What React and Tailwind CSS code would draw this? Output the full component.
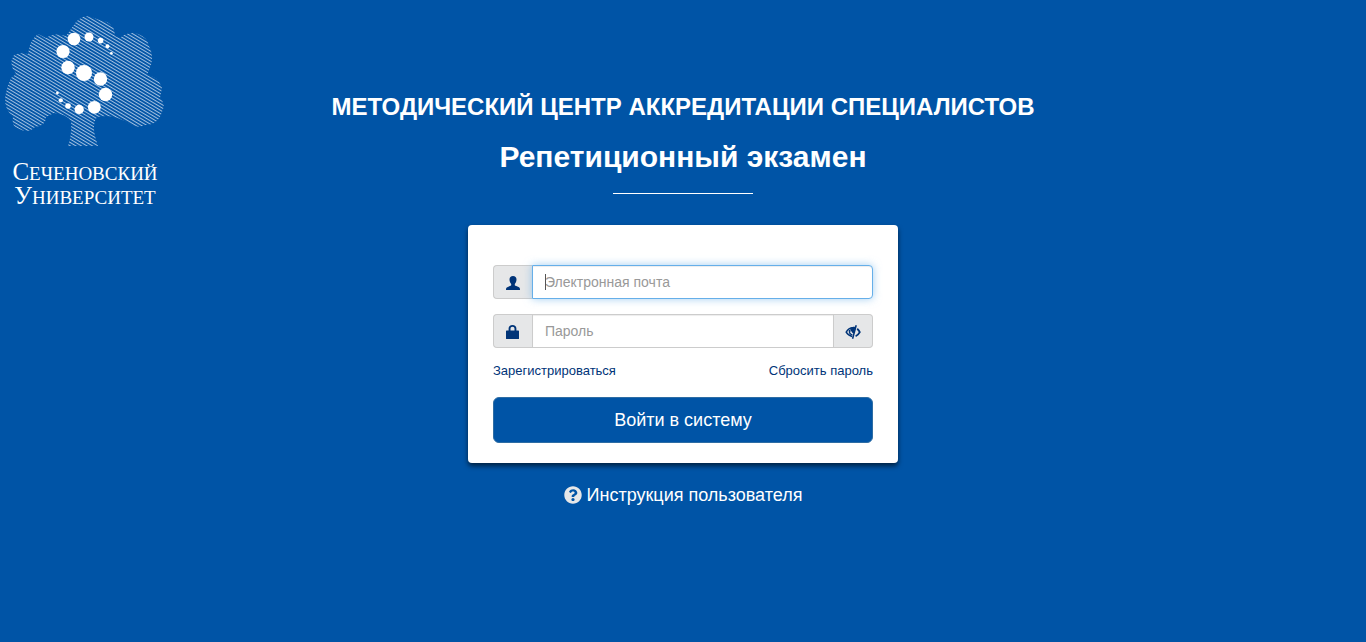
import { useState } from 'react';
import { FaQuestionCircle } from 'react-icons/fa';

const dots = [
  [89, 37, 4.5], [74, 39, 6.3], [63, 51.5, 6.6], [68, 67.5, 6.7], [84, 73, 8],
  [100.5, 79, 6.7], [105.5, 94.5, 6.7], [94.3, 107.3, 6.4], [79.2, 109.4, 4.6],
  [68, 106, 2.8], [60.8, 100.3, 2.1], [57.4, 93, 1.4],
  [100.6, 40.6, 2.8], [107.5, 46.3, 2], [111.3, 53.3, 1.4],
];

function Logo() {
  return (
    <div className="w-[170px] pt-3 text-white">
      <svg viewBox="0 12 170 140" className="block w-full" role="img" aria-label="Сеченовский Университет">
        <defs>
          <pattern id="hatch" width="20" height="2.85" patternUnits="userSpaceOnUse" patternTransform="rotate(31)">
            <rect width="20" height="1" fill="#a3c0e0" />
          </pattern>
        </defs>
        <path
          fill="url(#hatch)"
          d="M76 22 Q84 13 94 18 Q101 21 107 22 Q115 26 115 36 L120 38 Q128 31 138 34 Q147 37 149 46 Q154 56 151 65 L147 75 Q158 76 162 88 L160 98 Q166 104 162 112 Q158 125 145 125 Q138 129 130 124 Q117 116 106 116 L97 117 Q92 124 95 136 L98 146 L68 146 Q72 135 71 121 Q66 114 54 113 L46 117 Q46 126 35 127 Q29 134 19 129 Q11 127 13 116 Q5 111 5 98 Q7 86 11 78 L16 74 Q8 64 14 55 Q20 52 28 54 Q30 39 38 34 L46 38 Q54 32 66 36 Z"
        />
        {dots.map(([x, y, r]) => (
          <circle key={`${x}-${y}`} cx={x} cy={y} r={r} fill="#fff" />
        ))}
      </svg>
      <div className="mt-[9px] flex flex-col items-center font-['Liberation_Serif',serif] text-[19px] leading-[22px]">
        <span><span className="text-[25px] leading-[22px]">С</span>ЕЧЕНОВСКИЙ</span>
        <span><span className="text-[25px] leading-[22px]">У</span>НИВЕРСИТЕТ</span>
      </div>
    </div>
  );
}

function UserIcon() {
  return (
    <svg viewBox="0 0 14 14" className="size-3.5" fill="currentColor" aria-hidden="true">
      <path d="M7 0C4.8 0 3.5 1.4 3.5 3.6C3.5 5.4 4.2 7 5.2 8V9.3C5.2 9.8 0.9 10.8 0.3 12C0 12.7 0 13.3 0 14H14C14 13.3 14 12.7 13.7 12C13.1 10.8 8.8 9.8 8.8 9.3V8C9.8 7 10.5 5.4 10.5 3.6C10.5 1.4 9.2 0 7 0Z" />
    </svg>
  );
}

function LockIcon() {
  return (
    <svg viewBox="0 0 14 14" className="size-3.5" fill="currentColor" aria-hidden="true">
      <path fillRule="evenodd" d="M0.6 5.6H2.6V3.6C2.6 1.4 4.2 0 6.5 0S10.4 1.4 10.4 3.6V5.6H12.4Q13 5.6 13 6.2V13.4Q13 14 12.4 14H0.6Q0 14 0 13.4V6.2Q0 5.6 0.6 5.6ZM4.5 5.6H8.5V3.7C8.5 2.5 7.8 1.7 6.5 1.7S4.5 2.5 4.5 3.7Z" />
    </svg>
  );
}

function EyeCloseIcon() {
  return (
    <svg viewBox="0 0 16 14" className="h-3.5 w-4" fill="none" stroke="currentColor" aria-hidden="true">
      <path strokeWidth="1.5" d="M7.2 11.6C4.6 11 2.6 9.5 1.2 7.2C2.8 4.5 5.2 3 8 2.6C8.6 2.5 9.2 2.5 9.8 2.6" />
      <path strokeWidth="1.8" d="M12.2 3.8C13.3 4.7 14.2 5.9 14.8 7.2C13.8 9.2 12.4 10.4 10.6 11.2" />
      <path strokeWidth="1.2" d="M4.4 5C4 7.6 5.4 9.4 7.4 9.8" />
      <path fill="currentColor" stroke="none" d="M5.2 3.6L10.6 1.8L8.8 8.4C7.6 8.4 6.8 7.6 6.9 6.2L5.6 7Z" />
      <path strokeWidth="1.5" d="M11.2 0.3L7.6 13.8" />
    </svg>
  );
}

const addon = 'flex w-[39px] shrink-0 items-center justify-center border border-[#ccc] bg-[#e6e7e8] pt-0.5 text-[#003478]';
const field =
  'min-w-0 flex-1 border border-[#ccc] bg-white px-3 text-sm text-[#555] shadow-[inset_0_1px_1px_rgba(0,0,0,0.075)] outline-none placeholder:text-[#999] focus:border-[#66afe9] focus:shadow-[inset_0_1px_1px_rgba(0,0,0,0.075),0_0_8px_rgba(102,175,233,0.6)]';

export default function App() {
  const [email, setEmail] = useState('');
  const [password, setPassword] = useState('');
  const [visible, setVisible] = useState(false);

  return (
    <div className="grid min-h-screen grid-cols-[1fr_auto_1fr] items-start bg-[#0054a6] font-['Liberation_Sans',Arial,sans-serif]">
      <Logo />
      <main className="flex flex-col items-center pt-[94px] text-white">
        <h1 className="text-2xl leading-[26px] font-bold">МЕТОДИЧЕСКИЙ ЦЕНТР АККРЕДИТАЦИИ СПЕЦИАЛИСТОВ</h1>
        <h2 className="mt-5 text-3xl leading-[34px] font-bold">Репетиционный экзамен</h2>
        <hr className="mt-[19px] w-[140px] border-white" />

        <form
          onSubmit={(e) => e.preventDefault()}
          className="mt-[31px] w-[430px] rounded bg-white px-[25px] pt-10 pb-5 shadow-[0_3px_5px_rgba(0,0,0,0.6)]"
        >
          <div className="relative flex h-[34px]">
            <label htmlFor="email" aria-label="Электронная почта" className={`${addon} rounded-l border-r-0`}>
              <UserIcon />
            </label>
            <input
              id="email"
              type="email"
              autoFocus
              value={email}
              onChange={(e) => setEmail(e.target.value)}
              placeholder="Электронная почта"
              className={`${field} peer rounded-r placeholder-shown:caret-transparent`}
            />
            {/* steady caret while the field is still empty */}
            <span
              aria-hidden="true"
              className="pointer-events-none absolute top-[9px] left-[52px] hidden h-4 w-px bg-[#555] peer-placeholder-shown:peer-focus:block"
            />
          </div>
          <div className="mt-[15px] flex h-[34px]">
            <label htmlFor="password" aria-label="Пароль" className={`${addon} rounded-l border-r-0`}>
              <LockIcon />
            </label>
            <input
              id="password"
              type={visible ? 'text' : 'password'}
              value={password}
              onChange={(e) => setPassword(e.target.value)}
              placeholder="Пароль"
              className={field}
            />
            <button
              type="button"
              aria-label="Показать пароль"
              onClick={() => setVisible(!visible)}
              className={`${addon} rounded-r border-l-0`}
            >
              <EyeCloseIcon />
            </button>
          </div>
          <div className="mt-[13px] flex justify-between text-[13px] leading-5 text-[#003478]">
            <a href="#register">Зарегистрироваться</a>
            <a href="#reset">Сбросить пароль</a>
          </div>
          <button
            type="submit"
            className="mt-4 h-[46px] w-full rounded-md border border-[#2e6da4] bg-[#0054a6] text-lg text-white"
          >
            Войти в систему
          </button>
        </form>

        <a href="#manual" className="mt-5 flex items-center gap-[5px] text-lg leading-6">
          <FaQuestionCircle className="size-[18px] text-[#e6e7e8]" />
          Инструкция пользователя
        </a>
      </main>
    </div>
  );
}
